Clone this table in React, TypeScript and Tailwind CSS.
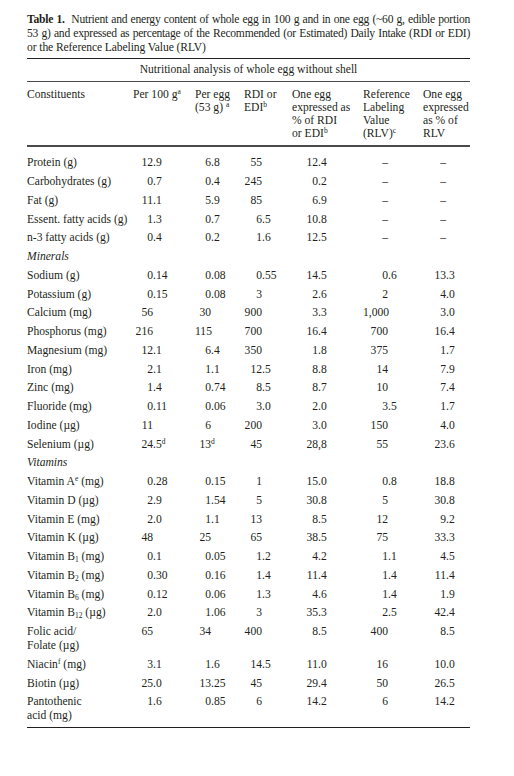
import type { ReactNode } from 'react';

type Row = { label: ReactNode; values?: string[]; section?: boolean };

const cols = 'grid grid-cols-[106px_62px_49px_48px_71px_60px_47px]';
const intWidths = ['w-[20px]', 'w-[16px]', 'w-[18px]', 'w-[26px]', 'w-[25px]', 'w-[23px]'];

const Sup = ({ children }: { children: ReactNode }) => (
  <sup className="text-[7.5px] -top-[0.55em]">{children}</sup>
);
const Sub = ({ children }: { children: ReactNode }) => (
  <sub className="text-[7.5px]">{children}</sub>
);

const rows: Row[] = [
  { label: 'Protein (g)', values: ['12.9', '6.8', '55', '12.4', '–', '–'] },
  { label: 'Carbohydrates (g)', values: ['0.7', '0.4', '245', '0.2', '–', '–'] },
  { label: 'Fat (g)', values: ['11.1', '5.9', '85', '6.9', '–', '–'] },
  { label: 'Essent. fatty acids (g)', values: ['1.3', '0.7', '6.5', '10.8', '–', '–'] },
  { label: 'n-3 fatty acids (g)', values: ['0.4', '0.2', '1.6', '12.5', '–', '–'] },
  { label: 'Minerals', section: true },
  { label: 'Sodium (g)', values: ['0.14', '0.08', '0.55', '14.5', '0.6', '13.3'] },
  { label: 'Potassium (g)', values: ['0.15', '0.08', '3', '2.6', '2', '4.0'] },
  { label: 'Calcium (mg)', values: ['56', '30', '900', '3.3', '1,000', '3.0'] },
  { label: 'Phosphorus (mg)', values: ['216', '115', '700', '16.4', '700', '16.4'] },
  { label: 'Magnesium (mg)', values: ['12.1', '6.4', '350', '1.8', '375', '1.7'] },
  { label: 'Iron (mg)', values: ['2.1', '1.1', '12.5', '8.8', '14', '7.9'] },
  { label: 'Zinc (mg)', values: ['1.4', '0.74', '8.5', '8.7', '10', '7.4'] },
  { label: 'Fluoride (mg)', values: ['0.11', '0.06', '3.0', '2.0', '3.5', '1.7'] },
  { label: 'Iodine (µg)', values: ['11', '6', '200', '3.0', '150', '4.0'] },
  { label: 'Selenium (µg)', values: ['24.5^d', '13^d', '45', '28,8', '55', '23.6'] },
  { label: 'Vitamins', section: true },
  { label: <>Vitamin A<Sup>e</Sup> (mg)</>, values: ['0.28', '0.15', '1', '15.0', '0.8', '18.8'] },
  { label: 'Vitamin D (µg)', values: ['2.9', '1.54', '5', '30.8', '5', '30.8'] },
  { label: 'Vitamin E (mg)', values: ['2.0', '1.1', '13', '8.5', '12', '9.2'] },
  { label: 'Vitamin K (µg)', values: ['48', '25', '65', '38.5', '75', '33.3'] },
  { label: <>Vitamin B<Sub>1</Sub> (mg)</>, values: ['0.1', '0.05', '1.2', '4.2', '1.1', '4.5'] },
  { label: <>Vitamin B<Sub>2</Sub> (mg)</>, values: ['0.30', '0.16', '1.4', '11.4', '1.4', '11.4'] },
  { label: <>Vitamin B<Sub>6</Sub> (mg)</>, values: ['0.12', '0.06', '1.3', '4.6', '1.4', '1.9'] },
  { label: <>Vitamin B<Sub>12</Sub> (µg)</>, values: ['2.0', '1.06', '3', '35.3', '2.5', '42.4'] },
  { label: <>Folic acid/<br />Folate (µg)</>, values: ['65', '34', '400', '8.5', '400', '8.5'] },
  { label: <>Niacin<Sup>f</Sup> (mg)</>, values: ['3.1', '1.6', '14.5', '11.0', '16', '10.0'] },
  { label: 'Biotin (µg)', values: ['25.0', '13.25', '45', '29.4', '50', '26.5'] },
  { label: <>Pantothenic<br />acid (mg)</>, values: ['1.6', '0.85', '6', '14.2', '6', '14.2'] },
];

// decimal-aligned cell: integer part right-aligned in a fixed box
const Num = ({ v, col }: { v: string; col: number }) => {
  const [main, sup] = v.split('^');
  const m = main.match(/^(\d+)([.,]\d{1,2})$/);
  const int = m ? m[1] : main;
  const frac = m ? m[2] : '';
  return (
    <div className="flex whitespace-nowrap">
      <span className={`${intWidths[col]} shrink-0 text-right`}>{int}</span>
      <span>
        {frac}
        {sup && <Sup>{sup}</Sup>}
      </span>
    </div>
  );
};

export default function App() {
  return (
    <div className="min-h-[776px] w-[514px] bg-white text-[#231f20] [font-family:'Liberation_Serif',serif] text-[11.6px]">
      <div className="ml-[27px] w-[443px] pt-[13px]">
        <div className="leading-[14px]">
          <div className="text-justify [text-align-last:justify] tracking-[-0.25px]">
            <b>Table 1.</b>&nbsp; Nutrient and energy content of whole egg in 100 g and in one egg (~60 g, edible portion
          </div>
          <div className="text-justify [text-align-last:justify] tracking-[-0.25px]">
            53 g) and expressed as percentage of the Recommended (or Estimated) Daily Intake (RDI or EDI)
          </div>
          <div className="tracking-[-0.1px]">or the Reference Labeling Value (RLV)</div>
        </div>

        <div className="mt-[3px] h-px bg-[#231f20]" />
        <div className="py-[4px] text-center leading-[14px]">Nutritional analysis of whole egg without shell</div>
        <div className="h-px bg-[#4a4a4a]" />

        <div className={`${cols} whitespace-nowrap pt-[6px] pb-[5px] leading-[13px]`}>
          <div>Constituents</div>
          <div>
            Per 100 g<Sup>a</Sup>
          </div>
          <div>
            Per egg
            <br />
            (53 g) <Sup>a</Sup>
          </div>
          <div>
            RDI or
            <br />
            EDI<Sup>b</Sup>
          </div>
          <div>
            One egg
            <br />
            expressed as
            <br />
            % of RDI
            <br />
            or EDI<Sup>b</Sup>
          </div>
          <div>
            Reference
            <br />
            Labeling
            <br />
            Value
            <br />
            (RLV)<Sup>c</Sup>
          </div>
          <div>
            One egg
            <br />
            expressed
            <br />
            as % of
            <br />
            RLV
          </div>
        </div>
        <div className="h-[1.5px] bg-[#4a4a4a]" />

        <div className="pt-[7.5px] pb-[1.5px]">
          {rows.map((r, i) =>
            r.section ? (
              <div key={i} className="py-[2.38px] leading-[14px] italic">
                {r.label}
              </div>
            ) : (
              <div key={i} className={`${cols} py-[2.38px] leading-[14px]`}>
                <div className="whitespace-nowrap">{r.label}</div>
                {r.values!.map((v, c) => (
                  <Num key={c} v={v} col={c} />
                ))}
              </div>
            )
          )}
        </div>
        <div className="h-px bg-[#231f20]" />
      </div>
    </div>
  );
}
